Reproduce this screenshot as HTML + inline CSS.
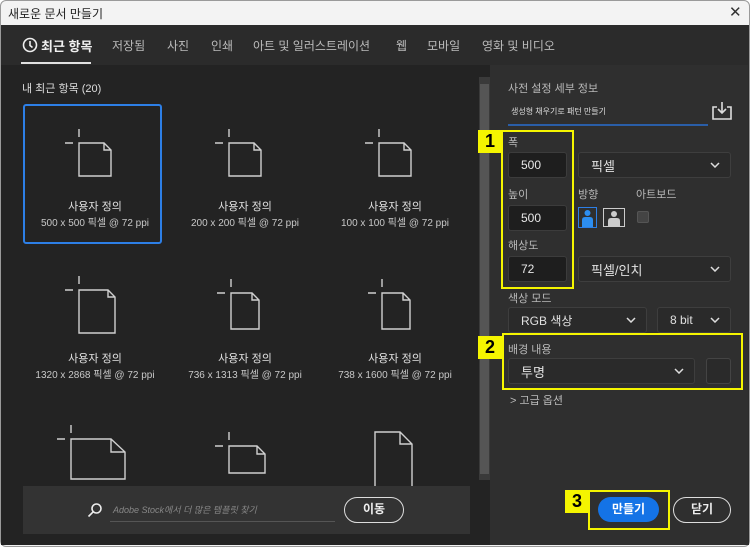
<!DOCTYPE html>
<html><head><meta charset="utf-8"><style>
*{margin:0;padding:0;box-sizing:border-box}
body{width:750px;height:547px;background:#fff;font-family:"Liberation Sans","Noto Sans CJK KR",sans-serif;position:relative;overflow:hidden}
.a{position:absolute}
.t{color:#d0d0d0;font-size:12px;white-space:nowrap}
.lbl{color:#b8b8b8;font-size:11px;position:absolute;white-space:nowrap}
.inp{position:absolute;background:#1e1e1e;border:1px solid #3c3c3c;border-radius:3px;color:#e8e8e8;font-size:12px;padding-left:12px;display:flex;align-items:center}
.sel{position:absolute;background:#2a2a2a;border:1px solid #3e3e3e;border-radius:3px;color:#e0e0e0;font-size:13px;padding-left:12px;display:flex;align-items:center}
.sel svg{position:absolute;right:10px;top:50%;margin-top:-3px}
.tt{position:absolute;text-align:center;width:150px;color:#e0e0e0;font-size:11px}
.ts{position:absolute;text-align:center;width:150px;color:#c8c8c8;font-size:10px}
.yb{position:absolute;border:2px solid #f5f500}
.yn{position:absolute;background:#f5f500;color:#000;font-weight:bold;font-size:18px;text-align:center;line-height:23px}
</style></head><body>
<div class="a" style="left:0;top:0;width:750px;height:547px;border:1px solid #9a9a9a;border-radius:6px;background:#f3f3f3"></div>
<div class="a" style="left:8px;top:5px;font-size:12px;color:#222">새로운 문서 만들기</div>
<div class="a" style="left:729px;top:3px;font-size:15px;color:#333">✕</div>
<div class="a" style="left:1px;top:25px;width:748px;height:520px;background:#2b2b2b"></div>
<svg class="a" style="left:22px;top:37px" width="16" height="16"><circle cx="8" cy="8" r="6.5" fill="none" stroke="#eee" stroke-width="1.6"/><path d="M8 4V8.5L10.5 10.5" stroke="#eee" stroke-width="1.6" fill="none"/></svg>
<div class="a" style="left:41px;top:36px;font-size:13px;color:#f0f0f0;font-weight:bold">최근 항목</div>
<div class="a" style="left:21px;top:62px;width:70px;height:2px;background:#e0e0e0"></div>
<div class="a t" style="left:112px;top:37px;color:#bbb">저장됨</div>
<div class="a t" style="left:167px;top:37px;color:#bbb">사진</div>
<div class="a t" style="left:211px;top:37px;color:#bbb">인쇄</div>
<div class="a t" style="left:253px;top:37px;color:#bbb">아트 및 일러스트레이션</div>
<div class="a t" style="left:396px;top:37px;color:#bbb">웹</div>
<div class="a t" style="left:427px;top:37px;color:#bbb">모바일</div>
<div class="a t" style="left:482px;top:37px;color:#bbb">영화 및 비디오</div>
<div class="a" style="left:1px;top:65px;width:489px;height:480px;background:#232323"></div>
<div class="a" style="left:479px;top:77px;width:11px;height:403px;background:#3a3a3a"></div>
<div class="a" style="left:480px;top:84px;width:9px;height:390px;background:#555"></div>
<div class="a" style="left:22px;top:80px;font-size:11px;color:#ddd">내 최근 항목 (20)</div>
<div class="a" style="left:23px;top:104px;width:139px;height:140px;border:2px solid #2d7fe6;border-radius:3px"></div>
<svg class="a" style="left:0;top:0" width="490" height="547" fill="none" stroke="#cfcfcf" stroke-width="1.4">
<path d="M79 143H104L111 150V176H79Z M104 143V150H111 M65 143H73 M79 129V137"/>
<path d="M229 143H254L261 150V176H229Z M254 143V150H261 M215 143H223 M229 129V137"/>
<path d="M379 143H404L411 150V176H379Z M404 143V150H411 M365 143H373 M379 129V137"/>
<path d="M79 290H108L115 297V333H79Z M108 290V297H115 M65 290H73 M79 276V284"/>
<path d="M231 293H252L259 300V329H231Z M252 293V300H259 M217 293H225 M231 279V287"/>
<path d="M382 293H403L410 300V329H382Z M403 293V300H410 M368 293H376 M382 279V287"/>
<path d="M71 439H111L125 452V479H71Z M111 439V452H125 M57 439H65 M71 425V433"/>
<path d="M229 446H257L265 454V473H229Z M257 446V454H265 M215 446H223 M229 432V440"/>
<path d="M375 486V432H400L412 444V486 M400 432V444H412"/>
</svg>
<div class="tt" style="left:20px;top:198px">사용자 정의</div><div class="ts" style="left:20px;top:214px">500 x 500 픽셀 @ 72 ppi</div>
<div class="tt" style="left:170px;top:198px">사용자 정의</div><div class="ts" style="left:170px;top:214px">200 x 200 픽셀 @ 72 ppi</div>
<div class="tt" style="left:320px;top:198px">사용자 정의</div><div class="ts" style="left:320px;top:214px">100 x 100 픽셀 @ 72 ppi</div>
<div class="tt" style="left:20px;top:350px">사용자 정의</div><div class="ts" style="left:20px;top:366px">1320 x 2868 픽셀 @ 72 ppi</div>
<div class="tt" style="left:170px;top:350px">사용자 정의</div><div class="ts" style="left:170px;top:366px">736 x 1313 픽셀 @ 72 ppi</div>
<div class="tt" style="left:320px;top:350px">사용자 정의</div><div class="ts" style="left:320px;top:366px">738 x 1600 픽셀 @ 72 ppi</div>
<div class="a" style="left:23px;top:486px;width:447px;height:48px;background:#333"></div>
<svg class="a" style="left:87px;top:502px" width="16" height="16" fill="none" stroke="#eee" stroke-width="1.6"><circle cx="9.5" cy="6.5" r="4.5"/><path d="M6.3 9.7L1.5 14.5"/></svg>
<div class="a" style="left:113px;top:503px;font-size:9px;color:#888;font-style:italic">Adobe Stock에서 더 많은 템플릿 찾기</div>
<div class="a" style="left:110px;top:521px;width:225px;height:1px;background:#555"></div>
<div class="a" style="left:344px;top:497px;width:60px;height:26px;border:1.5px solid #ddd;border-radius:13px;color:#eee;font-size:12px;font-weight:bold;text-align:center;line-height:23px">이동</div>
<div class="a" style="left:490px;top:65px;width:258px;height:480px;background:#2f2f2f"></div>
<div class="lbl" style="left:508px;top:80px;font-size:11px">사전 설정 세부 정보</div>
<div class="a" style="left:511px;top:106px;font-size:8px;color:#ddd">생성형 채우기로 패턴 만들기</div>
<div class="a" style="left:508px;top:124px;width:200px;height:2px;background:#2a5ea8"></div>
<svg class="a" style="left:712px;top:101px" width="20" height="20" fill="none" stroke="#ddd" stroke-width="1.6"><path d="M5 6H1V18H19V6H15 M10 1V12 M6 8L10 12L14 8"/></svg>
<div class="lbl" style="left:508px;top:134px">폭</div>
<div class="inp" style="left:508px;top:152px;width:59px;height:26px">500</div>
<div class="sel" style="left:578px;top:152px;width:153px;height:26px">픽셀<svg width="10" height="6"><path d="M1 1L5 5L9 1" stroke="#ddd" stroke-width="1.5" fill="none"/></svg></div>
<div class="lbl" style="left:508px;top:186px">높이</div>
<div class="lbl" style="left:578px;top:186px">방향</div>
<div class="lbl" style="left:636px;top:186px">아트보드</div>
<div class="inp" style="left:508px;top:205px;width:59px;height:26px">500</div>
<div class="a" style="left:578px;top:207px;width:19px;height:21px;border:1px solid #2d7fe6"></div>
<svg class="a" style="left:579px;top:208px" width="17" height="19"><circle cx="8.5" cy="5" r="3" fill="#2d8ef0"/><path d="M3 19V12Q3 9 6 9H11Q14 9 14 12V19Z" fill="#2d8ef0"/></svg>
<div class="a" style="left:603px;top:208px;width:22px;height:19px;border:1px solid #ccc"></div>
<svg class="a" style="left:604px;top:209px" width="20" height="17"><circle cx="10" cy="5" r="3" fill="#ccc"/><path d="M4 17V12Q4 9 7 9H13Q16 9 16 12V17Z" fill="#ccc"/></svg>
<div class="a" style="left:637px;top:211px;width:12px;height:12px;background:#444;border:1px solid #555;border-radius:2px"></div>
<div class="lbl" style="left:508px;top:237px">해상도</div>
<div class="inp" style="left:508px;top:256px;width:59px;height:26px">72</div>
<div class="sel" style="left:578px;top:256px;width:153px;height:26px">픽셀/인치<svg width="10" height="6"><path d="M1 1L5 5L9 1" stroke="#ddd" stroke-width="1.5" fill="none"/></svg></div>
<div class="lbl" style="left:508px;top:290px">색상 모드</div>
<div class="sel" style="left:508px;top:307px;width:139px;height:26px;font-size:12px">RGB 색상<svg width="10" height="6"><path d="M1 1L5 5L9 1" stroke="#ddd" stroke-width="1.5" fill="none"/></svg></div>
<div class="sel" style="left:657px;top:307px;width:74px;height:26px;font-size:12px">8 bit<svg width="10" height="6"><path d="M1 1L5 5L9 1" stroke="#ddd" stroke-width="1.5" fill="none"/></svg></div>
<div class="lbl" style="left:508px;top:341px">배경 내용</div>
<div class="sel" style="left:508px;top:358px;width:187px;height:26px">투명<svg width="10" height="6"><path d="M1 1L5 5L9 1" stroke="#ddd" stroke-width="1.5" fill="none"/></svg></div>
<div class="a" style="left:706px;top:358px;width:25px;height:26px;border:1px solid #444;border-radius:3px;background:#2a2a2a"></div>
<div class="lbl" style="left:510px;top:392px;color:#bbb">&gt; 고급 옵션</div>
<div class="a" style="left:598px;top:497px;width:61px;height:25px;background:#1473e6;border-radius:13px;color:#fff;font-size:12px;font-weight:bold;text-align:center;line-height:25px">만들기</div>
<div class="a" style="left:673px;top:497px;width:58px;height:26px;border:1.5px solid #ddd;border-radius:13px;color:#eee;font-size:12px;font-weight:bold;text-align:center;line-height:23px">닫기</div>
<div class="yb" style="left:501px;top:130px;width:73px;height:159px"></div>
<div class="yn" style="left:478px;top:130px;width:24px;height:23px">1</div>
<div class="yb" style="left:502px;top:333px;width:241px;height:57px"></div>
<div class="yn" style="left:478px;top:336px;width:24px;height:23px">2</div>
<div class="yb" style="left:588px;top:490px;width:82px;height:40px"></div>
<div class="yn" style="left:565px;top:490px;width:24px;height:23px">3</div>
</body></html>
